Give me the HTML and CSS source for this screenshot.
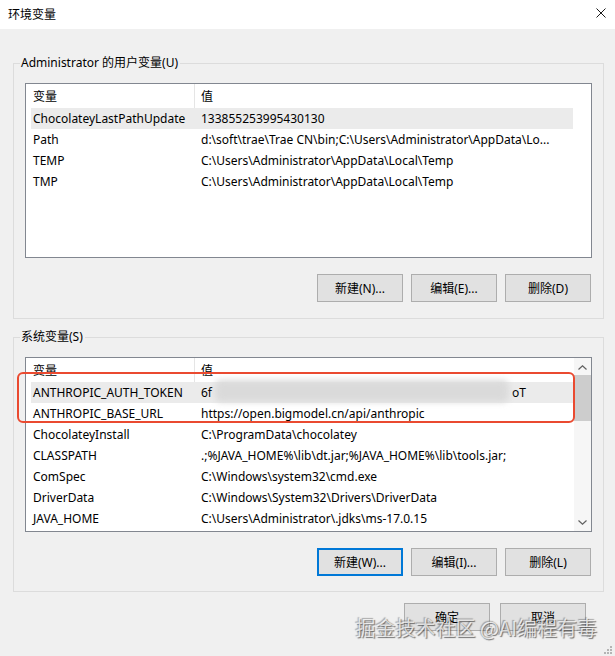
FILE: index.html
```html
<!DOCTYPE html>
<html lang="zh-CN">
<head>
<meta charset="utf-8">
<title>环境变量</title>
<link rel="stylesheet" href="styles.css">
</head>
<body>
<div class="window">
  <div class="titlebar">
    <span class="title">环境变量</span>
    <svg class="close" width="10" height="10" viewBox="0 0 10 10"><path d="M0.5 0.5 L9.5 9.5 M9.5 0.5 L0.5 9.5" stroke="#1a1a1a" stroke-width="1" fill="none"/></svg>
  </div>
  <div class="content">
    <fieldset class="group group-user">
      <legend>Administrator 的用户变量(U)</legend>
      <div class="list">
        <div class="rows">
          <div class="lv-head"><div class="c1">变量</div><div class="c2">值</div></div>
          <div class="row sel"><div class="c1">ChocolateyLastPathUpdate</div><div class="c2">133855253995430130</div></div>
          <div class="row"><div class="c1">Path</div><div class="c2">d:\soft\trae\Trae CN\bin;C:\Users\Administrator\AppData\Lo...</div></div>
          <div class="row"><div class="c1">TEMP</div><div class="c2">C:\Users\Administrator\AppData\Local\Temp</div></div>
          <div class="row"><div class="c1">TMP</div><div class="c2">C:\Users\Administrator\AppData\Local\Temp</div></div>
        </div>
      </div>
      <div class="btns">
        <button class="btn">新建(N)...</button>
        <button class="btn">编辑(E)...</button>
        <button class="btn">删除(D)</button>
      </div>
    </fieldset>

    <fieldset class="group group-sys">
      <legend>系统变量(S)</legend>
      <div class="list">
        <div class="rows">
          <div class="lv-head"><div class="c1">变量</div><div class="c2">值</div></div>
          <div class="row sel"><div class="c1">ANTHROPIC_AUTH_TOKEN</div><div class="c2 token"><span>6f</span><span>oT</span></div></div>
          <div class="row"><div class="c1">ANTHROPIC_BASE_URL</div><div class="c2">https://open.bigmodel.cn/api/anthropic</div></div>
          <div class="row"><div class="c1">ChocolateyInstall</div><div class="c2">C:\ProgramData\chocolatey</div></div>
          <div class="row"><div class="c1">CLASSPATH</div><div class="c2">.;%JAVA_HOME%\lib\dt.jar;%JAVA_HOME%\lib\tools.jar;</div></div>
          <div class="row"><div class="c1">ComSpec</div><div class="c2">C:\Windows\system32\cmd.exe</div></div>
          <div class="row"><div class="c1">DriverData</div><div class="c2">C:\Windows\System32\Drivers\DriverData</div></div>
          <div class="row"><div class="c1">JAVA_HOME</div><div class="c2">C:\Users\Administrator\.jdks\ms-17.0.15</div></div>
        </div>
        <div class="vscroll">
          <svg class="arrow" width="9" height="5" viewBox="0 0 9 5"><path d="M0.5 4.5 L4.5 0.8 L8.5 4.5" stroke="#606060" stroke-width="1.2" fill="none"/></svg>
          <div class="thumb"></div>
          <div class="track"></div>
          <svg class="arrow" width="9" height="5" viewBox="0 0 9 5"><path d="M0.5 0.5 L4.5 4.2 L8.5 0.5" stroke="#606060" stroke-width="1.2" fill="none"/></svg>
        </div>
        <div class="blur"></div>
        <div class="highlight"></div>
      </div>
      <div class="btns">
        <button class="btn focus">新建(W)...</button>
        <button class="btn">编辑(I)...</button>
        <button class="btn">删除(L)</button>
      </div>
    </fieldset>

    <div class="dialog-btns">
      <button class="btn">确定</button>
      <button class="btn">取消</button>
    </div>
  </div>
  <div class="watermark">掘金技术社区 @AI编程有毒</div>
  <svg class="grip" width="8" height="8" viewBox="0 0 8 8">
    <rect x="6" y="0" width="2" height="2" fill="#b4b4b4"/>
    <rect x="3" y="3" width="2" height="2" fill="#b4b4b4"/>
    <rect x="6" y="3" width="2" height="2" fill="#b4b4b4"/>
    <rect x="0" y="6" width="2" height="2" fill="#b4b4b4"/>
    <rect x="3" y="6" width="2" height="2" fill="#b4b4b4"/>
    <rect x="6" y="6" width="2" height="2" fill="#b4b4b4"/>
  </svg>
</div>
</body>
</html>
```

FILE: styles.css
```css
* { box-sizing: border-box; }

html, body {
  margin: 0;
  padding: 0;
}

body {
  width: 615px;
  height: 656px;
  overflow: hidden;
  background: #f0f0f0;
  font-family: "Noto Sans", "Noto Sans CJK SC", sans-serif;
  font-size: 12px;
  color: #000;
}

.window {
  position: relative;
  width: 615px;
  height: 656px;
}

.titlebar {
  height: 29px;
  background: #fff;
  display: flex;
  align-items: center;
  justify-content: space-between;
  padding: 0 9px 2px 8px;
}

.title {
  font-family: "Noto Sans CJK SC", sans-serif;
  font-size: 12px;
  line-height: 16px;
}

.close {
  display: block;
  margin-top: -1px;
}

.content {
  padding: 26px 11px 0 13px;
}

.group {
  margin: 0;
  padding: 12px 11px 16px 11px;
  border: 1px solid #dcdcdc;
  min-inline-size: 0;
}

.group-sys {
  margin-top: 10px;
  padding-bottom: 15px;
}

.group legend {
  margin-left: -5px;
  padding: 0 2px 0 1px;
  line-height: 16px;
  font-size: 12px;
}

.list {
  position: relative;
  height: 175px;
  border: 1px solid #828790;
  background: #fff;
  display: flex;
}

.rows {
  width: 548px;
  flex: none;
}

.lv-head,
.row {
  display: flex;
  margin-left: 5px;
  width: 542px;
}

.lv-head {
  height: 24px;
  align-items: stretch;
  margin-left: 0;
  padding-left: 5px;
  width: 547px;
}

.lv-head .c1,
.lv-head .c2 {
  line-height: 24px;
  font-family: "Noto Sans CJK SC", sans-serif;
}

.lv-head .c1 {
  border-right: 1px solid #e5e5e5;
}

.row {
  height: 21px;
  line-height: 21px;
}

.row.sel {
  background: #ebebeb;
}

.c1 {
  width: 164px;
  flex: none;
  padding-left: 2px;
  white-space: nowrap;
  overflow: hidden;
}

.c2 {
  flex: 1;
  padding-left: 6px;
  white-space: nowrap;
  overflow: hidden;
}

.token {
  display: flex;
  justify-content: space-between;
  padding-right: 47px;
}

.vscroll {
  width: 17px;
  flex: none;
  background: #f6f6f6;
  display: flex;
  flex-direction: column;
  align-items: center;
}

.vscroll .arrow {
  display: block;
  margin: 7px 0 5px;
}

.vscroll .arrow:last-child {
  margin: 3px 0 6px;
}

.thumb {
  width: 17px;
  height: 46px;
  background: #cdcdcd;
}

.track {
  flex: 1;
}

.blur {
  position: absolute;
  left: 189px;
  top: 22px;
  width: 294px;
  height: 22px;
  background: #dadada;
  filter: blur(3px);
  border-radius: 6px;
}

.highlight {
  position: absolute;
  left: -9px;
  top: 14px;
  width: 558px;
  height: 51px;
  border: 2px solid #ea4a30;
  border-radius: 6px;
}

.btns {
  display: flex;
  justify-content: flex-end;
  gap: 8px;
  margin-top: 16px;
  padding-right: 1px;
}

.btn {
  width: 86px;
  height: 28px;
  background: #e1e1e1;
  border: 1px solid #adadad;
  border-radius: 0;
  padding: 0;
  margin: 0;
  font-family: "Noto Sans", "Noto Sans CJK SC", sans-serif;
  font-size: 12px;
  color: #000;
}

.btn.focus {
  border: 2px solid #0078d7;
}

.dialog-btns {
  display: flex;
  justify-content: flex-end;
  gap: 10px;
  margin-top: 11px;
  padding-right: 18px;
}

.watermark {
  position: absolute;
  right: 18px;
  top: 614px;
  font-family: "Noto Sans CJK SC", sans-serif;
  font-size: 20px;
  line-height: 28px;
  color: rgba(250, 250, 250, 0.75);
  text-shadow: 1px 1px 1px rgba(60, 60, 60, 0.7), -1px -1px 1px rgba(60, 60, 60, 0.4);
  white-space: nowrap;
}

.grip {
  position: absolute;
  right: 3px;
  bottom: 2px;
}
```
